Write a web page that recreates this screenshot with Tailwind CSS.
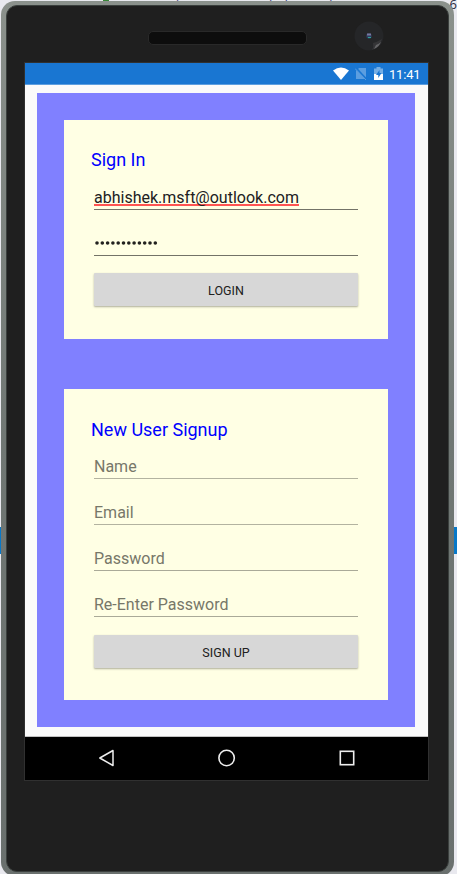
<!DOCTYPE html>
<html lang="en">
<head>
<meta charset="utf-8">
<title>Sign In</title>
<script src="https://cdn.jsdelivr.net/npm/@tailwindcss/browser@4"></script>
</head>
<body class="relative w-[457px] h-[874px] overflow-hidden bg-[#e9e9ef] font-[Roboto,sans-serif]">
<!-- Editor window behind the device -->
<div class="absolute inset-x-0 top-[527px] h-[27px] bg-[#0878c8]"></div>
<div class="absolute left-[103px] top-0 w-[6px] h-px bg-[#378537]"></div>
<div class="absolute left-[102px] -top-[9px] font-mono text-[12px] leading-[12px] whitespace-nowrap text-[#3d4380]">&nbsp;&nbsp;&nbsp;&nbsp;MainLayout.children[0].BackgroundColor</div>
<div class="absolute right-0 -top-[2px] font-[Open_Sans,sans-serif] text-[13px] leading-[13px] text-[#28283c]">6</div>

<div class="relative ml-px mt-px w-[453px] h-[875px] rounded-[14px] p-[5px] pt-[4px] pb-[4px] bg-linear-to-b from-[#8b918c] via-[#707774] via-50% to-[#6a706e]">
  <div class="relative h-[867px] w-[443px] rounded-[11px] bg-[#1f1f1f] border border-[#3b403e] pl-[18px] flex flex-col">
    <header class="h-[57px] relative shrink-0">
      <div class="absolute left-[123px] top-[25px] w-[159px] h-[14px] rounded-[5px] bg-[#0d0d0d] border border-[#292929]"></div>
      <svg class="absolute left-[329px] top-[15px]" width="30" height="30" viewBox="0 0 30 30"><circle cx="15" cy="15" r="14.5" fill="#252628"/><path d="M19 22Q23 21 28 18Q26 26 18 29Q20 26 19 22Z" fill="#353537"/><path d="M22 24Q25 23 27 21Q25 26 20 28Z" fill="#666668"/><circle cx="15" cy="15" r="2.7" fill="#303b5c"/><path d="M13 12.5h4v2h-4z" fill="#77799f"/><path d="M14 16h3v1h-3z" fill="#28a59b"/></svg>
    </header>
    <main class="w-[403px] h-[717px] bg-[#fafafa] flex flex-col shrink-0 outline outline-[#303030]">
      <div class="h-[22px] bg-[#1976d2] border-b border-[#5d9edf] flex items-center justify-end pr-[7px] text-white shrink-0">
        <svg width="16" height="13" viewBox="0 0 16 13"><path d="M0 3.5Q8-2.5 16 3.5L8 13Z" fill="white"/></svg>
        <svg class="ml-[6px]" width="12" height="13" viewBox="0 0 12 13"><path d="M4 1H11V12H1V4Z" fill="#5c9ee0"/><path d="M0 0L12 13" stroke="#1976d2" stroke-width="2"/><path d="M0 1.5L11 13" stroke="#5c9ee0" stroke-width="1"/></svg>
        <svg class="ml-[7px]" width="9" height="13" viewBox="0 0 9 13"><path d="M2.5 0h4v1.5H9V7H0V1.5h2.5z" fill="#75aee5"/><path d="M0 7h9v6H0z" fill="white"/><path d="M5.5 3L2 8h2.3v3L7.5 6H5.5z" fill="#1976d2"/></svg>
        <span class="ml-[6px] w-[32px] pt-[2px] text-[13px] leading-[20px] tracking-[-0.2px] whitespace-nowrap">11:41</span>
      </div>
      <div class="ml-[12px] mt-[8px] w-[378px] h-[634px] bg-[#8080ff] pt-[27px] px-[27px] shrink-0">
        <section class="h-[219px] bg-[#ffffe4] pt-[26px] px-[27px]">
          <h1 class="h-[28px] leading-[28px] text-[18px] text-[#0000ff]">Sign In</h1>
          <div class="ml-[3px] w-[264px]">
            <div class="h-[36px] border-b border-[#737367] pt-[13px] text-[16px] leading-[20px] text-[#21211e]"><span class="block w-[205px] h-[19px] border-b-2 border-[#ff5452] leading-[22px] whitespace-nowrap">abhishek.msft@outlook.com</span></div>
            <div class="h-[46px] border-b border-[#737367] pt-[31px]">
              <svg class="block" width="70" height="4" viewBox="0 0 70 4" fill="#21211e"><circle cx="3" cy="2" r="1.8"/><circle cx="8.3" cy="2" r="1.8"/><circle cx="13.6" cy="2" r="1.8"/><circle cx="18.9" cy="2" r="1.8"/><circle cx="24.2" cy="2" r="1.8"/><circle cx="29.5" cy="2" r="1.8"/><circle cx="34.8" cy="2" r="1.8"/><circle cx="40.1" cy="2" r="1.8"/><circle cx="45.4" cy="2" r="1.8"/><circle cx="50.7" cy="2" r="1.8"/><circle cx="56" cy="2" r="1.8"/><circle cx="61.3" cy="2" r="1.8"/></svg>
            </div>
            <button class="block mt-[17px] w-[264px] h-[33px] pt-[3px] rounded-[1px] bg-[#d7d7d7] shadow-[0_1px_2px_#77776899] text-[12.5px] text-[#202020]">LOGIN</button>
          </div>
        </section>
        <section class="mt-[50px] h-[311px] bg-[#ffffe4] pt-[26px] px-[27px]">
          <h2 class="h-[28px] leading-[30px] text-[18px] text-[#0000ff] whitespace-nowrap">New User Signup</h2>
          <div class="ml-[3px] w-[264px] text-[16px] leading-[20px] text-[#777769]">
            <div class="h-[36px] border-b border-[#b3b3a0] pt-[14px]">Name</div>
            <div class="h-[46px] border-b border-[#b3b3a0] pt-[24px]">Email</div>
            <div class="h-[46px] border-b border-[#aaaa98] pt-[24px]">Password</div>
            <div class="h-[46px] border-b border-[#aaaa98] pt-[24px]">Re-Enter Password</div>
            <button class="block mt-[18px] w-[264px] h-[33px] pt-[2px] rounded-[1px] bg-[#d7d7d7] shadow-[0_1px_2px_#77776899] text-[12.5px] text-[#202020]">SIGN UP</button>
          </div>
        </section>
      </div>
      <nav class="mt-auto h-[44px] bg-black border-t border-[#c0c0c0] relative flex items-center pb-[2px] pl-[73px] gap-[103px]">
        <svg width="17" height="18" viewBox="0 0 17 18" fill="none" stroke="#eee" stroke-width="1.5"><path d="M15 1.5V16.5L1.8 9Z" stroke-linejoin="round"/></svg>
        <svg width="18" height="18" viewBox="0 0 18 18" fill="none" stroke="#eee" stroke-width="1.6"><circle cx="8.6" cy="9" r="7.7"/></svg>
        <svg width="17" height="18" viewBox="0 0 17 18" fill="none" stroke="#eee" stroke-width="1.6"><rect x="1.3" y="2.3" width="13.4" height="13.4"/></svg>
      </nav>
    </main>
  </div>
</div>
</body>
</html>
